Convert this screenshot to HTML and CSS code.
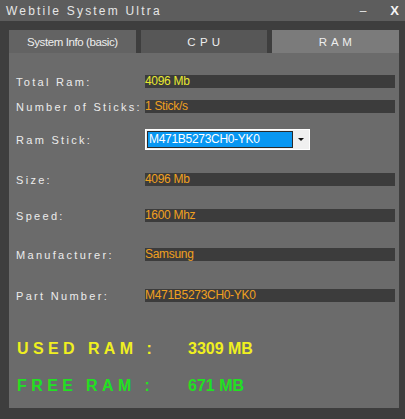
FILE: index.html
```html
<!DOCTYPE html>
<html>
<head>
<meta charset="utf-8">
<link rel="stylesheet" href="styles.css">
</head>
<body>
<div class="window">
  <div class="titlebar">
    <span class="title">Webtile System Ultra</span>
    <span class="controls"><span class="min">–</span><span class="close">X</span></span>
  </div>
  <div class="body">
    <div class="tabs">
      <div class="tab tab-info">System Info (basic)</div>
      <div class="tab tab-cpu">C P U</div>
      <div class="tab tab-ram">R A M</div>
    </div>
    <div class="panel">
      <div class="row r1"><span class="label">Total Ram:</span><span class="value yellow">4096 Mb</span></div>
      <div class="row r2"><span class="label">Number of Sticks:</span><span class="value">1 Stick/s</span></div>
      <div class="row r3"><span class="label">Ram Stick:</span>
        <span class="combo"><span class="combo-sel">M471B5273CH0-YK0</span><span class="combo-btn"><span class="arrow"></span></span></span>
      </div>
      <div class="row r4"><span class="label">Size:</span><span class="value">4096 Mb</span></div>
      <div class="row r5"><span class="label">Speed:</span><span class="value">1600 Mhz</span></div>
      <div class="row r6"><span class="label">Manufacturer:</span><span class="value">Samsung</span></div>
      <div class="row r7"><span class="label">Part Number:</span><span class="value">M471B5273CH0-YK0</span></div>
      <div class="stat used"><span class="stat-label">USED RAM :</span><span class="stat-value">3309 MB</span></div>
      <div class="stat free"><span class="stat-label">FREE RAM :</span><span class="stat-value">671 MB</span></div>
    </div>
  </div>
</div>
</body>
</html>
```
FILE: styles.css
```css
html, body {
  margin: 0;
  padding: 0;
}
body {
  width: 405px;
  height: 419px;
  overflow: hidden;
  background: #3e3e3e;
  font-family: "Liberation Sans", Arial, sans-serif;
}
.window {
  width: 405px;
  height: 419px;
  display: flex;
  flex-direction: column;
}
.titlebar {
  height: 21px;
  background: #5d5d5d;
  display: flex;
  align-items: center;
  justify-content: space-between;
  padding: 0 6px 0 6px;
  color: #e6e6e6;
}
.title {
  font-size: 12px;
  letter-spacing: 2.2px;
}
.controls {
  display: flex;
  align-items: center;
}
.min {
  font-size: 12px;
  margin-right: 24px;
}
.close {
  font-weight: bold;
  font-size: 13px;
  color: #f4f4f4;
}
.body {
  flex: 1;
  padding: 9px 6px 11px 9px;
  display: flex;
  flex-direction: column;
}
.tabs {
  display: flex;
  gap: 5px;
  height: 23px;
}
.tab {
  flex: 1;
  display: flex;
  align-items: center;
  justify-content: center;
  font-size: 11.5px;
  color: #eeeeee;
}
.tab-info { background: #636363; letter-spacing: -0.4px; }
.tab-cpu { background: #575757; letter-spacing: 0.6px; }
.tab-ram { background: #7b7b7b; letter-spacing: 0.6px; }
.panel {
  flex: 1;
  background: #6b6b6b;
  padding: 22px 4px 0 7px;
  display: flex;
  flex-direction: column;
}
.row {
  display: flex;
  align-items: center;
  height: 13px;
}
.label {
  width: 129px;
  flex: none;
  font-size: 11px;
  letter-spacing: 2.3px;
  color: #ececec;
  white-space: nowrap;
}
.value {
  width: 250px;
  height: 13px;
  background: #3c3c3c;
  color: #f0a020;
  font-size: 12px;
  letter-spacing: -0.3px;
  line-height: 13px;
  white-space: nowrap;
}
.value.yellow { color: #e8e830; }
.r2 { margin-top: 12px; }
.r3 { margin-top: 16px; height: 21px; }
.r4 { margin-top: 23px; }
.r5 { margin-top: 23px; }
.r6 { margin-top: 26px; }
.r7 { margin-top: 28px; }
.combo {
  width: 165px;
  height: 21px;
  box-sizing: border-box;
  background: #f0f0f0;
  border: 1px solid #ffffff;
  display: flex;
}
.combo-sel {
  width: 146px;
  box-sizing: border-box;
  margin: 1px 0 1px 1px;
  border: 1px solid #2a2a2a;
  background: #0897f2;
  color: #ffffff;
  font-size: 12px;
  letter-spacing: -0.3px;
  line-height: 15px;
  padding-left: 1px;
  white-space: nowrap;
}
.combo-btn {
  flex: 1;
  display: flex;
  align-items: center;
  justify-content: center;
}
.arrow {
  width: 0;
  height: 0;
  border-left: 3px solid transparent;
  border-right: 3px solid transparent;
  border-top: 3px solid #111;
}
.stat {
  display: flex;
  align-items: center;
  font-weight: bold;
  font-size: 16px;
  height: 20px;
}
.stat-label {
  width: 171px;
  flex: none;
  letter-spacing: 4.4px;
  padding-left: 1px;
}
.used { color: #f0f020; margin-top: 37px; }
.free { color: #22e022; margin-top: 17px; }
```
